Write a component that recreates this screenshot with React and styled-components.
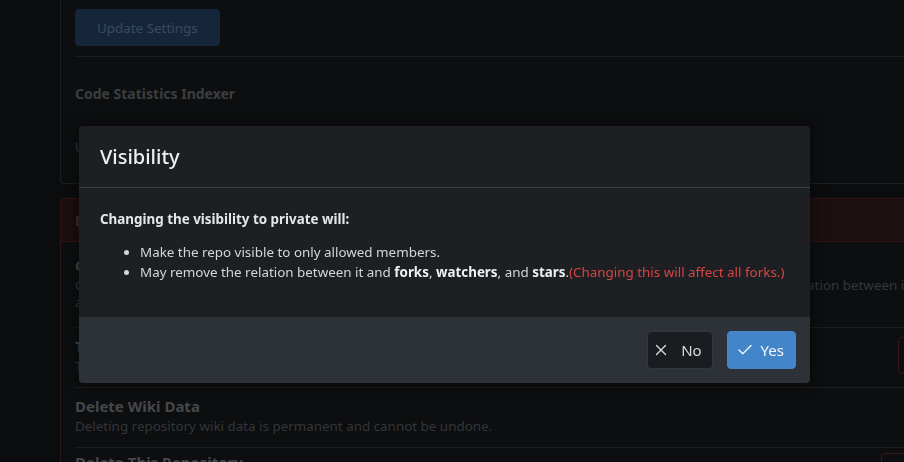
import React from "react"
import styled, { createGlobalStyle } from "styled-components"
import { X, Check } from "lucide-react"

const GlobalStyle = createGlobalStyle`
  html, body {
    margin: 0;
    padding: 0;
    background: #0b0c0d;
    overflow: hidden;
  }
  body {
    font-family: "Noto Sans", "Open Sans", sans-serif;
    font-size: 13.4px;
    color: #3a3d40;
  }
`

const Page = styled.div`
  width: 1003px;
  height: 462px;
  padding-left: 60px;
  display: flex;
  flex-direction: column;
  gap: 14px;
`

const Card = styled.div`
  flex-shrink: 0;
  background: #0d0e0f;
  border: 1px solid ${p => (p.danger ? "#2e1416" : "#1c1e20")};
  border-top: ${p => (p.noTop ? "none" : undefined)};
  border-radius: ${p => (p.noTop ? "0 0 4px 4px" : "4px")};
  overflow: hidden;
`

const CardBody = styled.div`
  padding: ${p => p.pad || "0 14px"};
`

const DimButton = styled.div`
  display: inline-flex;
  align-items: center;
  justify-content: center;
  flex-shrink: 0;
  height: 37px;
  padding: 0 ${p => (p.outline ? "12px" : "21px")};
  border-radius: 4px;
  background: ${p => (p.outline ? "transparent" : "#16263a")};
  border: 1px solid ${p => (p.outline ? "#3a1719" : "#16263a")};
  color: ${p => (p.outline ? "#4a2226" : "#3a4a5b")};
  box-sizing: border-box;
  white-space: nowrap;
  width: ${p => p.w || "auto"};
`

const Divider = styled.div`
  height: 1px;
  background: #1a1c1e;
`

const SectionTitle = styled.div`
  font-weight: 700;
  font-size: 14px;
  line-height: 20px;
  color: #3b3e41;
  padding: ${p => p.pad || "0"};
`

const IndexerRow = styled.div`
  display: flex;
  align-items: flex-start;
  gap: 66px;
  height: 57px;
`

const IndexerLabel = styled.div`
  padding-top: 12px;
  color: #3a3d40;
`

const DangerHeader = styled.div`
  height: 42px;
  background: #1b0f10;
  border-bottom: 1px solid #2e1416;
  display: flex;
  align-items: center;
  padding: 0 14px;
  font-weight: 700;
  font-size: 14px;
  color: #46302f;
`

const DangerItem = styled.div`
  display: flex;
  align-items: center;
  justify-content: space-between;
  gap: 12px;
  padding: ${p => p.pad || "12px 0"};
  border-bottom: ${p => (p.last ? "none" : "1px solid #1a1c1e")};
  margin: 0 14px;
`

const ItemText = styled.div`
  flex: 1;
  min-width: 0;
`

const ItemTitle = styled.div`
  font-weight: 700;
  font-size: 15px;
  line-height: 20px;
  color: #45484b;
`

const ItemDesc = styled.div`
  line-height: 17px;
  color: #33363a;
  margin-top: 2px;
`

const Dimmer = styled.div`
  position: fixed;
  inset: 0;
  padding: 126px 0 0 79px;
`

const Modal = styled.div`
  width: 731px;
  background: #1d1f23;
  border-radius: 4px;
  box-shadow: 0 0 14px rgba(0, 0, 0, 0.55);
  overflow: hidden;
  color: #d2d6da;
`

const ModalHeader = styled.div`
  height: 61px;
  display: flex;
  align-items: center;
  padding: 0 21px;
  border-bottom: 1px solid #3c4046;
  font-size: 20px;
  font-weight: 500;
  color: #eef1f4;
`

const ModalContent = styled.div`
  padding: 21px 21px 35px;
  line-height: 20px;
`

const Lead = styled.div`
  font-weight: 700;
  color: #e4e7ea;
  margin-bottom: 13px;
`

const List = styled.ul`
  margin: 0;
  padding-left: 40px;
`

const Strong = styled.b`
  color: #eef1f4;
`

const Warn = styled.span`
  color: #d64545;
`

const ModalActions = styled.div`
  background: #2c3238;
  display: flex;
  justify-content: flex-end;
  gap: 14px;
  padding: 14px;
`

const ActionButton = styled.button`
  display: inline-flex;
  align-items: center;
  gap: ${p => (p.primary ? "7px" : "11px")};
  height: 38px;
  padding: 0 ${p => (p.primary ? "11px 0 8px" : "10px 0 4px")};
  border-radius: 4px;
  border: 1px solid ${p => (p.primary ? "#4787c9" : "#34383d")};
  background: ${p => (p.primary ? "#4285c8" : "#1a1c1f")};
  color: ${p => (p.primary ? "#f4f7fa" : "#d8dce0")};
  font-family: inherit;
  font-size: 15px;
  box-sizing: border-box;
`

export default function App() {
  return (
    <>
      <GlobalStyle />
      <Page>
        <Card noTop>
          <CardBody pad="9px 14px 0">
            <DimButton>Update Settings</DimButton>
            <div style={{ height: 10 }} />
            <Divider />
            <SectionTitle pad="27px 0 22px">Code Statistics Indexer</SectionTitle>
            <IndexerRow>
              <IndexerLabel>Update</IndexerLabel>
              <DimButton w="187px">Update Indexer</DimButton>
            </IndexerRow>
          </CardBody>
        </Card>

        <Card danger>
          <DangerHeader>Danger Zone</DangerHeader>
          <DangerItem pad="13px 0 16px">
            <ItemText>
              <ItemTitle>Change Repository Visibility</ItemTitle>
              <ItemDesc>
                Changing the visibility to private will not only make the repo visible to only allowed members but may remove the relation
                between it and forks, watchers, and stars.
              </ItemDesc>
            </ItemText>
            <DimButton outline>Make Private</DimButton>
          </DangerItem>
          <DangerItem pad="8px 0 12px">
            <ItemText>
              <ItemTitle>Transfer Ownership</ItemTitle>
              <ItemDesc>Transfer this repository to another user or to an organization for which you have administrator rights.</ItemDesc>
            </ItemText>
            <DimButton outline>Transfer Ownership</DimButton>
          </DangerItem>
          <DangerItem pad="8px 0 12px">
            <ItemText>
              <ItemTitle>Delete Wiki Data</ItemTitle>
              <ItemDesc>Deleting repository wiki data is permanent and cannot be undone.</ItemDesc>
            </ItemText>
            <DimButton outline>Delete Wiki Data</DimButton>
          </DangerItem>
          <DangerItem pad="4px 0" last>
            <ItemText>
              <ItemTitle>Delete This Repository</ItemTitle>
              <ItemDesc>There is no going back. Please be certain.</ItemDesc>
            </ItemText>
            <DimButton outline>Delete This Repository</DimButton>
          </DangerItem>
        </Card>
      </Page>

      <Dimmer>
        <Modal>
          <ModalHeader>Visibility</ModalHeader>
          <ModalContent>
            <Lead>Changing the visibility to private will:</Lead>
            <List>
              <li>Make the repo visible to only allowed members.</li>
              <li>
                May remove the relation between it and <Strong>forks</Strong>, <Strong>watchers</Strong>, and{" "}
                <Strong>stars</Strong>.<Warn>(Changing this will affect all forks.)</Warn>
              </li>
            </List>
          </ModalContent>
          <ModalActions>
            <ActionButton>
              <X size={18} strokeWidth={1.8} />
              No
            </ActionButton>
            <ActionButton primary>
              <Check size={18} strokeWidth={1.8} />
              Yes
            </ActionButton>
          </ModalActions>
        </Modal>
      </Dimmer>
    </>
  )
}
